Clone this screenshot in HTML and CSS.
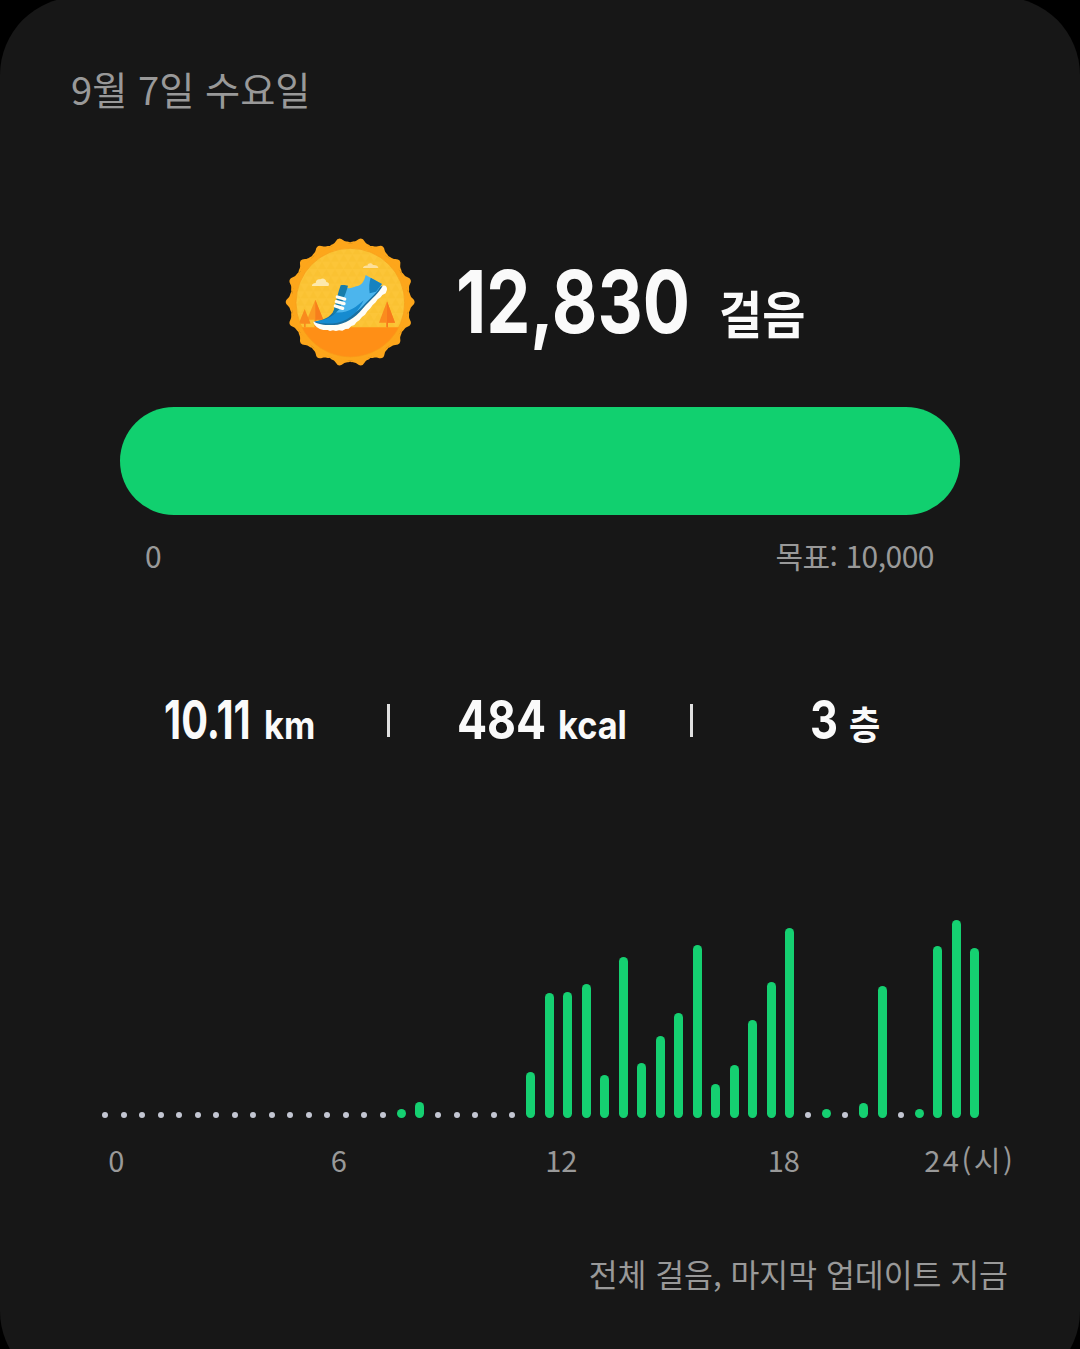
FILE: index.html
```html
<!DOCTYPE html>
<html lang="ko">
<head>
<meta charset="utf-8">
<title>걸음</title>
<link rel="stylesheet" href="styles.css">
</head>
<body>
<main class="card">
  <header class="date">9월 7일 수요일</header>

  <section class="summary">
    <svg class="badge" viewBox="45 36 390 390" aria-hidden="true">
      <defs>
        <path id="tooth" d="M173 34C182 27 178 19 186 12Q201 0 186 -12C178 -19 182 -27 173 -34Z"/>
        <g id="teeth3"><use href="#tooth"/><use href="#tooth" transform="rotate(20)"/><use href="#tooth" transform="rotate(40)"/></g>
        <pattern id="mesh" width="26" height="44" patternUnits="userSpaceOnUse">
          <path d="M0 22L13 0L26 22ZM-13 44L0 22L13 44ZM13 44L26 22L39 44Z" fill="#f7b924" opacity=".3"/>
        </pattern>
        <clipPath id="disc"><circle cx="241" cy="233" r="163"/></clipPath>
      </defs>
      <g transform="translate(240.500 231)" fill="#fda61b">
        <circle r="176"/>
        <use href="#teeth3"/><use href="#teeth3" transform="rotate(60)"/><use href="#teeth3" transform="rotate(120)"/>
        <use href="#teeth3" transform="rotate(180)"/><use href="#teeth3" transform="rotate(240)"/><use href="#teeth3" transform="rotate(300)"/>
      </g>
      <g clip-path="url(#disc)">
        <path fill="#fcc538" d="M70 60H410V310H70Z"/>
        <path fill="url(#mesh)" d="M70 60H410V310H70Z"/>
        <path fill="#ff8f16" d="M70 307H410V400H70Z"/>
        <path fill="#fb9a22" d="M136 224L160 284H139V307H133V284H111Z"/>
        <path fill="#f77e1c" d="M136 224L160 284H139V307H136Z"/>
        <path fill="#f98a1d" d="M104 252L122 296H107V307H102V296H86Z"/>
        <path fill="#fb8b1e" d="M351 229L375 293H354V307H348V293H327Z"/>
        <path fill="#f7791c" d="M351 229L375 293H354V307H351Z"/>
      </g>
      <circle cx="241" cy="233" r="163" fill="none" stroke="#f79c18" stroke-width="2"/>
      <path fill="#fde9ad" d="M126 183C125 178 130 175 137 174C137 165 144 161 151 163C158 158 168 162 169 171C177 172 179 179 175 183Z"/>
      <path fill="#fde09a" d="M279 129C279 124 285 121 292 122C294 114 305 112 309 120C317 119 325 123 325 129Z"/>
      <path fill="#fffdf6" d="M130 290C131 301 146 312 160 315L173 315L180 318L189 316L198 318L207 316L217 317L227 312L236 311L244 303L253 300L260 291L268 286L276 276L285 269L292 259L301 250L308 240L317 232L323 223L332 217L337 210L347 205L351 194C352 184 346 179 338 182L284 240L220 285Z"/>
      <path fill="#1b6f9f" d="M132 290C166 286 190 272 196 244L338 182C328 203 305 221 287 241C262 271 240 292 203 299C174 302 146 299 132 290Z"/>
      <path fill="#4cb5ed" d="M287 150L335 177C326 200 301 219 282 239C257 268 228 278 202 275L194 246L228 186C236 193 246 189 258 184C274 182 283 170 287 150Z"/>
      <path fill="#168bd0" d="M134 289C163 286 184 279 195 262C231 267 258 247 281 226C267 256 244 284 203 293C179 297 151 297 134 289Z"/>
      <path fill="#177daa" d="M187 273L206 199L212 181C220 178 228 181 234 182L228 202L208 253Z"/>
      <path fill="#1682c0" d="M302 158L336 177L318 200L299 205C296 187 298 171 302 158Z"/>
      <path fill="none" stroke="#fffdf5" stroke-width="10" stroke-linecap="round" d="M202 216L224 222M199 230L222 236M196 243L218 250"/>
    </svg>
    <span class="steps"><span class="fit">12,830</span></span>
    <span class="steps-unit"><span class="fit">걸음</span></span>
  </section>

  <div class="progress"></div>
  <div class="range"><span>0</span><span class="goal">목표: 10,000</span></div>

  <section class="stats">
    <div class="stat distance"><span class="num"><span class="fit">10.11</span></span><span class="unit"><span class="fit">km</span></span></div>
    <i class="rule"></i>
    <div class="stat energy"><span class="num"><span class="fit">484</span></span><span class="unit"><span class="fit">kcal</span></span></div>
    <i class="rule"></i>
    <div class="stat floors"><span class="num"><span class="fit">3</span></span><span class="unit"><span class="fit">층</span></span></div>
  </section>

  <section class="chart">
    <i></i><i></i><i></i><i></i><i></i><i></i><i></i><i></i>
    <i></i><i></i><i></i><i></i><i></i><i></i><i></i><i></i>
    <b style="height:9px"></b><b style="height:16px"></b><i></i><i></i><i></i><i></i><i></i><b style="height:46px"></b>
    <b style="height:125px"></b><b style="height:126px"></b><b style="height:134px"></b><b style="height:43px"></b>
    <b style="height:161px"></b><b style="height:55px"></b><b style="height:82px"></b><b style="height:105px"></b>
    <b style="height:173px"></b><b style="height:34px"></b><b style="height:53px"></b><b style="height:98px"></b>
    <b style="height:136px"></b><b style="height:190px"></b><i></i><b style="height:9px"></b>
    <i></i><b style="height:15px"></b><b style="height:132px"></b><i></i>
    <b style="height:9px"></b><b style="height:172px"></b><b style="height:198px"></b><b style="height:170px"></b>
  </section>
  <div class="axis"><span>0</span><span>6</span><span>12</span><span>18</span><span class="last">24(시)</span></div>

  <footer class="updated">전체 걸음, 마지막 업데이트 지금</footer>
</main>
</body>
</html>
```
FILE: styles.css
```css
* { box-sizing: border-box; }
html { background: #000; }
body {
  margin: 0;
  height: 1349px;
  overflow: hidden;
  background: #000;
  color: #fafafa;
  font-family: Inter, "Noto Sans CJK KR", sans-serif;
}
.card {
  display: flex;
  flex-direction: column;
  height: 1392px;
  margin-top: -3px;
  padding-top: 62px;
  border-radius: 78px;
  background: #171717;
  white-space: nowrap;
}
.fit { display: inline-block; transform-origin: left center; }
.date {
  height: 60px;
  padding-left: 71px;
  color: #999;
  font: 38.2px/60px "Noto Sans CJK KR", sans-serif;
}
.summary {
  display: flex;
  height: 130px;
  margin-top: 118px;
  padding-left: 285px;
  line-height: 130px;
}
.badge { width: 130px; height: 130px; }
.steps { width: 262px; padding-left: 41px; margin-right: 42px; font-size: 86px; font-weight: 700; }
.steps .fit { transform: scaleX(.815); }
.steps-unit { padding-top: 14px; font-size: 51px; font-weight: 700; }
.steps-unit .fit { transform: scaleX(.92); }
.progress {
  height: 108px;
  margin: 40px 120px 0;
  border-radius: 54px;
  background: #11d06f;
}
.range {
  display: flex;
  justify-content: space-between;
  height: 50px;
  margin-top: 15px;
  padding: 0 146px 0 145px;
  color: #999;
  font: 30px/50px "Noto Sans CJK KR", sans-serif;
}
.goal { letter-spacing: -.5px; }
.stats {
  display: flex;
  align-items: center;
  height: 80px;
  margin-top: 100px;
  padding-left: 164px;
  font-weight: 700;
}
.stat { display: flex; align-items: baseline; padding-top: 5px; line-height: 80px; }
.num { font-size: 53px; }
.unit { font-size: 39px; }
.distance { width: 223px; }
.distance .num { width: 100px; }
.distance .num .fit { transform: scaleX(.75); }
.distance .unit .fit { transform: scaleX(.88); }
.rule { width: 3px; height: 33px; background: #e0e0e0; }
.energy { width: 300px; padding-left: 67px; }
.energy .num { width: 101px; }
.energy .num .fit { transform: scaleX(.84); }
.energy .unit .fit { transform: scaleX(.88); }
.floors { padding-left: 117px; }
.floors .num { width: 39px; }
.floors .num .fit { transform: scaleX(.82); }
.floors .unit .fit { transform: scaleX(.87); }
.chart {
  display: grid;
  grid-template-columns: repeat(48, 18.51px);
  align-items: end;
  justify-items: center;
  height: 200px;
  margin-top: 158px;
  padding-left: 96px;
}
.chart i { width: 6px; height: 6px; border-radius: 3px; background: #c3c6d2; }
.chart b { width: 9px; border-radius: 4.500px; background: #15d071; }
.axis {
  display: grid;
  grid-template-columns: repeat(5, 222.500px);
  height: 50px;
  margin-top: 16px;
  padding-left: 5px;
  color: #999;
  font: 29px/50px "Noto Sans CJK KR", sans-serif;
  text-align: center;
}
.axis .last { padding-right: 73px; letter-spacing: 2.500px; }
.updated {
  margin-top: 65px;
  padding-right: 72px;
  color: #999;
  font: 31.4px/50px "Noto Sans CJK KR", sans-serif;
  text-align: right;
}
```
